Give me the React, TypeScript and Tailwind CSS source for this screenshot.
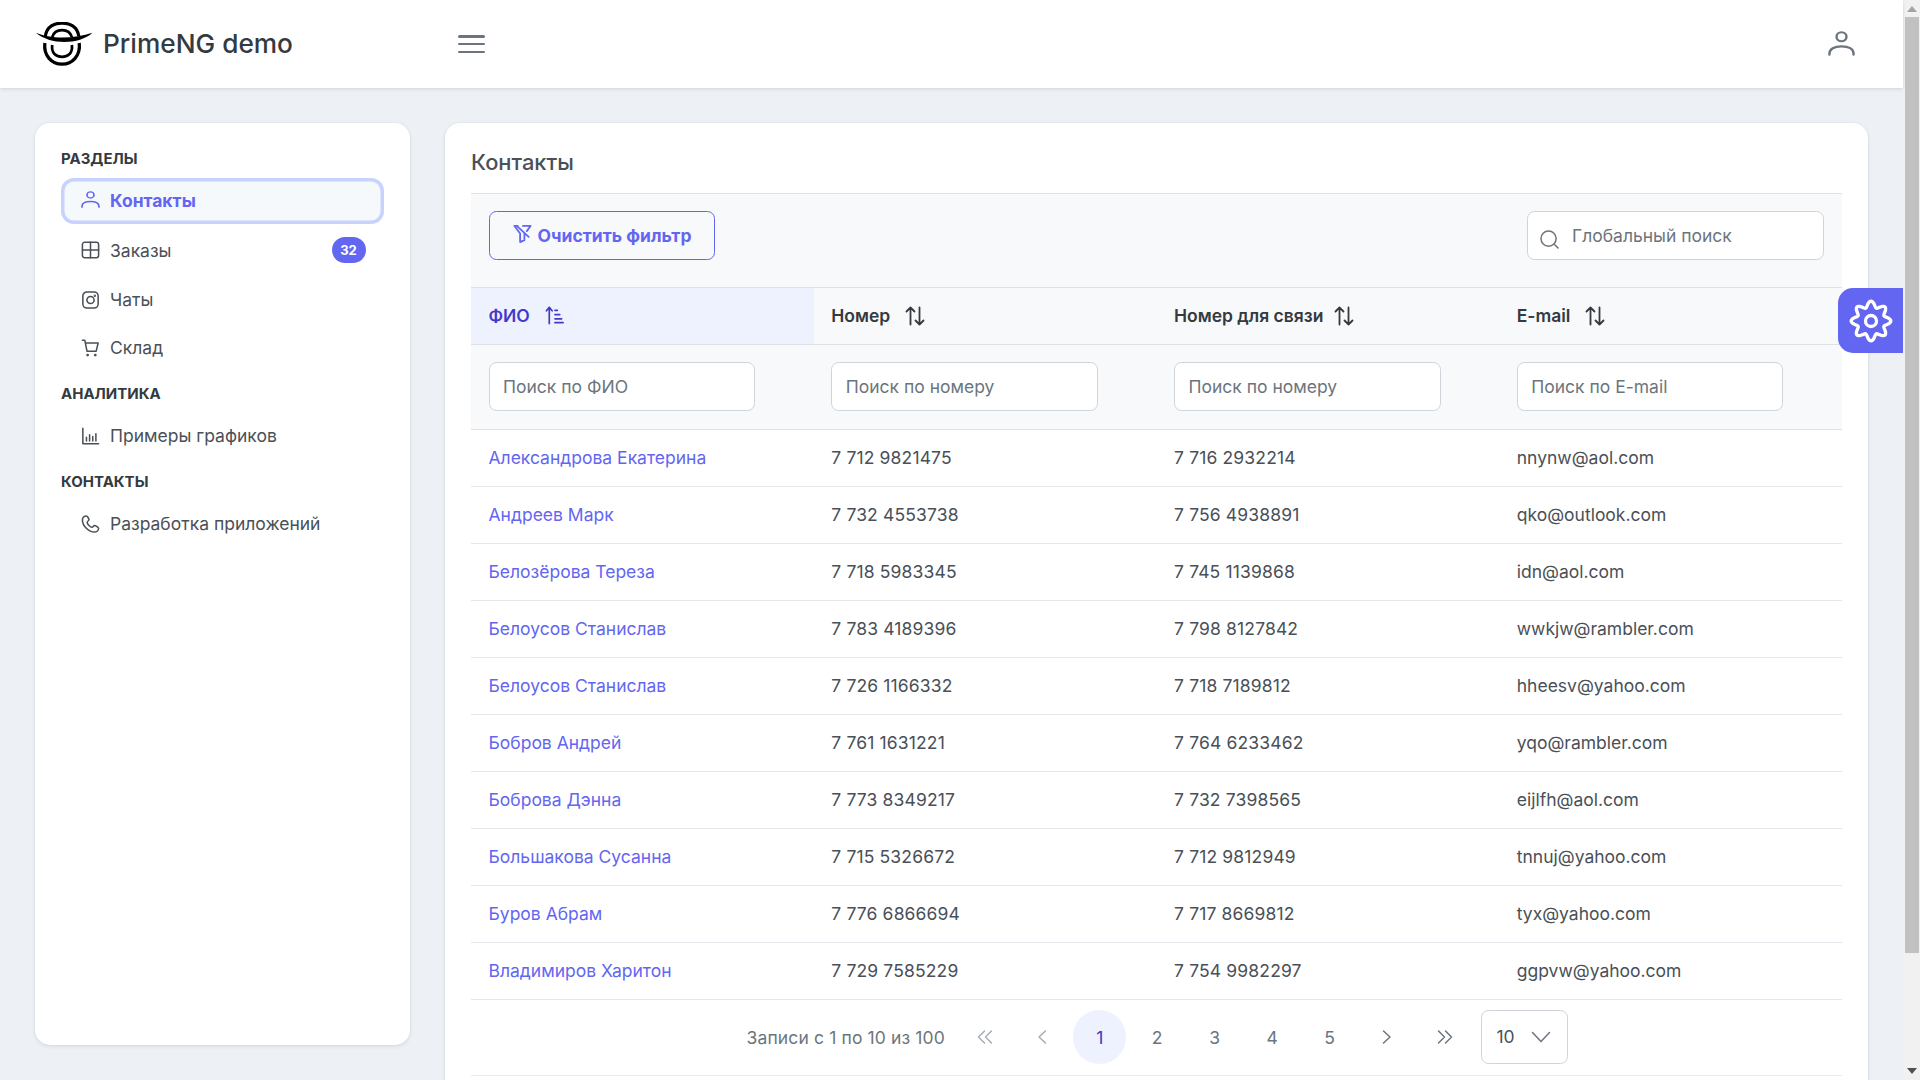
import type { ReactNode } from 'react'

// ---------------------------------------------------------------------------
// Data
// ---------------------------------------------------------------------------

const rows = [
  ['Александрова Екатерина', '7 712 9821475', '7 716 2932214', 'nnynw@aol.com'],
  ['Андреев Марк', '7 732 4553738', '7 756 4938891', 'qko@outlook.com'],
  ['Белозёрова Тереза', '7 718 5983345', '7 745 1139868', 'idn@aol.com'],
  ['Белоусов Станислав', '7 783 4189396', '7 798 8127842', 'wwkjw@rambler.com'],
  ['Белоусов Станислав', '7 726 1166332', '7 718 7189812', 'hheesv@yahoo.com'],
  ['Бобров Андрей', '7 761 1631221', '7 764 6233462', 'yqo@rambler.com'],
  ['Боброва Дэнна', '7 773 8349217', '7 732 7398565', 'eijlfh@aol.com'],
  ['Большакова Сусанна', '7 715 5326672', '7 712 9812949', 'tnnuj@yahoo.com'],
  ['Буров Абрам', '7 776 6866694', '7 717 8669812', 'tyx@yahoo.com'],
  ['Владимиров Харитон', '7 729 7585229', '7 754 9982297', 'ggpvw@yahoo.com'],
]

const cardShadow = 'shadow-[0_3px_5px_rgba(0,0,0,0.02),0_0_2px_rgba(0,0,0,0.05),0_1px_4px_rgba(0,0,0,0.08)]'

// ---------------------------------------------------------------------------
// Icons (thin outline set, drawn by hand)
// ---------------------------------------------------------------------------

function Icon({ className, children, stroke = '1.700' }: { className: string; children: ReactNode; stroke?: string }) {
  return (
    <svg viewBox="0 0 20 20" fill="none" stroke="currentColor" strokeWidth={stroke} strokeLinecap="round" strokeLinejoin="round" className={className}>
      {children}
    </svg>
  )
}

function UserIcon({ className }: { className: string }) {
  return (
    <svg viewBox="0.500 0.500 19 19.500" preserveAspectRatio="none" fill="none" stroke="currentColor" strokeWidth="1.700" strokeLinecap="round" className={className}>
      <circle cx="10" cy="5" r="3.500" />
      <path d="M1.500 19v-.8c0-3.800 3.400-5.700 8.500-5.700s8.500 1.900 8.500 5.700v.8" />
    </svg>
  )
}

function TableIcon({ className }: { className: string }) {
  return (
    <Icon className={className}>
      <rect x="1" y="1.500" width="18" height="17" rx="2.500" />
      <path d="M1 10h18M10 1.500v17" />
    </Icon>
  )
}

function InstagramIcon({ className }: { className: string }) {
  return (
    <Icon className={className}>
      <rect x="1.500" y="1" width="17" height="18" rx="4.500" />
      <circle cx="10" cy="10" r="4" />
      <circle cx="14.800" cy="5.200" r="0.500" />
    </Icon>
  )
}

function CartIcon({ className }: { className: string }) {
  return (
    <Icon className={className}>
      <path d="M1 1.500h2.700l2.400 12h10.200l2.200-9H4.500" />
      <circle cx="6.800" cy="17.800" r="0.700" />
      <circle cx="15.300" cy="17.800" r="0.700" />
    </Icon>
  )
}

function ChartIcon({ className }: { className: string }) {
  return (
    <Icon className={className}>
      <path d="M1.500 1.500v17h17.500M5.500 15.500v-4M9 15.500v-7M12.500 15.500v-5M16 15.500v-8" />
    </Icon>
  )
}

function PhoneIcon({ className }: { className: string }) {
  return (
    <Icon className={className}>
      <path d="M5.500 1C3 1 1 3 1 5.500 1 12 8 19 14.500 19c2.500 0 4.500-2 4.500-4 0-1-3.300-3.300-4.500-3.300-1 0-1.500 2-2.800 2-1.800 0-5.400-3.700-5.400-5.500 0-1.300 2-1.700 2-2.800C8.300 4.300 6.500 1 5.500 1Z" />
    </Icon>
  )
}

function FilterSlashIcon({ className }: { className: string }) {
  return (
    <Icon className={className} stroke="1.900">
      <path d="M5 1.500h-3.500l6 8v9l4.500-2v-6.500M10.500 1.500h8l-4 5.500M4 1.500l12.500 11.500" />
    </Icon>
  )
}

function SortIcon({ className }: { className: string }) {
  return (
    <Icon className={className} stroke="1.800">
      <path d="M5.500 18.500v-17M1.500 5.500l4-4 4 4M14.500 1.500v17M10.500 14.500l4 4 4-4" />
    </Icon>
  )
}

function SortUpIcon({ className }: { className: string }) {
  return (
    <Icon className={className} stroke="1.800">
      <path d="M4.500 18.500v-17M1.500 5l3-3.500 3 3.500M10.500 4.500h2.500M10.500 9h5M10.500 13.500h7M10.500 17.500h8.500" />
    </Icon>
  )
}

function PagerIcon({ d }: { d: string }) {
  return (
    <Icon className="h-[20px] w-[20px]" stroke="1.500">
      <path d={d} />
    </Icon>
  )
}

function gearPath() {
  const points: string[] = []
  for (let i = 0; i < 160; i++) {
    const angle = (i / 160) * Math.PI * 2
    const radius = 9.200 + 1.600 * Math.cos(8 * angle)
    points.push(`${(12 + radius * Math.sin(angle)).toFixed(2)} ${(12 - radius * Math.cos(angle)).toFixed(2)}`)
  }
  return `M${points.join('L')}Z`
}

function GearIcon({ className }: { className: string }) {
  return (
    <svg viewBox="0 0 24 24" fill="none" stroke="currentColor" strokeWidth="1.800" className={className}>
      <path d={gearPath()} />
      <circle cx="12" cy="12" r="3" />
    </svg>
  )
}

function Logo() {
  return (
    <svg viewBox="6 6 58 44" className="h-[44px] w-[57px] shrink-0 text-black" fill="none" stroke="currentColor">
      <path d="M15.500 20C17 10 25 6.800 32.500 6.800S48 10 49.500 20" strokeWidth="3.300" />
      <path d="M22.500 21C24 15.500 28 13.800 32.500 13.800S41 15.500 42.500 21" strokeWidth="2.800" />
      <path d="M6 16.500C20 23 45 23 63.500 16.500 50 29 20 29 6 16.500Z" fill="currentColor" stroke="none" />
      <path d="M15 27C13.500 40 22 48.500 32.500 48.500S51.500 40 50 27" strokeWidth="3.300" />
      <path d="M22.500 29C21.500 37 26 41 32.500 41S43.500 37 42.500 29" strokeWidth="2.800" />
    </svg>
  )
}

// ---------------------------------------------------------------------------
// Sidebar
// ---------------------------------------------------------------------------

function SectionLabel({ children, className }: { children: ReactNode; className: string }) {
  return <div className={`h-[21px] text-[15px] leading-[21px] font-bold text-[#343a40] uppercase ${className}`}>{children}</div>
}

function MenuItem({ icon, label, badge, className = '' }: { icon: ReactNode; label: string; badge?: string; className?: string }) {
  return (
    <a className={`flex h-[46.500px] items-center rounded-[13px] pr-[18.500px] pl-[20px] text-[#495057] ${className}`}>
      {icon}
      <span>{label}</span>
      {badge && (
        <span className="ml-auto flex h-[26px] w-[34px] items-center justify-center rounded-full bg-[#6366f1] text-[13px] font-bold text-white">
          {badge}
        </span>
      )}
    </a>
  )
}

function Sidebar() {
  const iconClass = 'mr-[10px] h-[18px] w-[19px] shrink-0 text-[#495057]'
  return (
    <aside className={`h-[922px] w-[375px] shrink-0 rounded-[15px] bg-white px-[26px] pt-[25px] ${cardShadow}`}>
      <SectionLabel className="mb-[9px]">Разделы</SectionLabel>
      <div className="flex flex-col gap-[3px]">
        <a className="flex h-[46.500px] items-center rounded-[13px] bg-[#f6f9fc] pl-[20px] font-bold text-[#6366f1] shadow-[inset_0_0_0_3.500px_#c7d2fe]">
          <UserIcon className="mr-[10px] -mt-[2px] h-[17px] w-[19px] shrink-0" />
          <span>Контакты</span>
        </a>
        <MenuItem icon={<TableIcon className={iconClass} />} label="Заказы" badge="32" />
        <MenuItem icon={<InstagramIcon className={iconClass} />} label="Чаты" />
        <MenuItem icon={<CartIcon className={iconClass} />} label="Склад" className="-mt-[1.500px]" />
      </div>
      <SectionLabel className="mt-[12px] mb-[8.500px]">Аналитика</SectionLabel>
      <MenuItem icon={<ChartIcon className={iconClass} />} label="Примеры графиков" />
      <SectionLabel className="mt-[12px] mb-[8.500px]">Контакты</SectionLabel>
      <MenuItem icon={<PhoneIcon className={iconClass} />} label="Разработка приложений" />
    </aside>
  )
}

// ---------------------------------------------------------------------------
// Table
// ---------------------------------------------------------------------------

const inputClass =
  'h-[48.500px] rounded-[7.500px] border border-[#ced4da] bg-white px-[13.500px] text-[17.500px] text-[#495057] outline-none placeholder:text-[#6c757d]'

function HeaderCell({ label, gap = 'gap-[15px]' }: { label: string; gap?: string }) {
  return (
    <th className="h-[56.500px] border-b border-[#dee2e6] px-[17.500px] text-left font-semibold text-[#343a40]">
      <span className={`flex items-center ${gap}`}>
        {label}
        <SortIcon className="h-[20px] w-[20px]" />
      </span>
    </th>
  )
}

function FilterCell({ placeholder }: { placeholder: string }) {
  return (
    <th className="border-b border-[#dee2e6] px-[17.500px] font-normal">
      <input placeholder={placeholder} className={`${inputClass} w-[266.500px]`} />
    </th>
  )
}

function PageButton({ children, dim, active }: { children: ReactNode; dim?: boolean; active?: boolean }) {
  return (
    <button
      className={`mx-[2.500px] flex h-[54.500px] w-[52.500px] items-center justify-center rounded-full ${
        active ? 'bg-[#eef2ff] text-[#4338ca]' : dim ? 'text-[#a7adb3]' : 'text-[#6c757d]'
      }`}
    >
      {children}
    </button>
  )
}

function Paginator() {
  return (
    <div className="flex h-[76px] items-center justify-center border-b border-[#e9ecef] pl-[2px] text-[#6c757d]">
      <span className="mr-[11px] tracking-[0.130px]">Записи с 1 по 10 из 100</span>
      <PageButton dim><PagerIcon d="M9.500 4L3.500 10l6 6M16.500 4l-6 6 6 6" /></PageButton>
      <PageButton dim><PagerIcon d="M13.500 4l-6.500 6 6.500 6" /></PageButton>
      <PageButton active>1</PageButton>
      <PageButton>2</PageButton>
      <PageButton>3</PageButton>
      <PageButton>4</PageButton>
      <PageButton>5</PageButton>
      <PageButton><PagerIcon d="M6.500 4l6.500 6-6.500 6" /></PageButton>
      <PageButton><PagerIcon d="M3.500 4l6 6-6 6M10.500 4l6 6-6 6" /></PageButton>
      <div className="ml-[8px] flex h-[54.500px] w-[87px] items-center rounded-[7.500px] border border-[#ced4da] bg-white pr-[16px] pl-[14px] text-[#495057]">
        <span className="-mt-[2px]">10</span>
        <Icon className="ml-auto h-[20px] w-[20px] text-[#6c757d]" stroke="1.500">
          <path d="M1.500 5.500l8.500 9 8.500-9" />
        </Icon>
      </div>
    </div>
  )
}

function ContactsCard() {
  return (
    <main className={`min-w-0 flex-1 rounded-[15px] bg-white px-[26px] pt-[25.500px] pb-[30px] ${cardShadow}`}>
      <h5 className="mb-[17px] text-[21.875px] leading-[28px] font-medium text-[#495057]">Контакты</h5>
      <div className="flex h-[94.500px] items-start justify-between border-y border-[#dee2e6] bg-[#f8f9fa] px-[18px] pt-[17px]">
        <button className="flex h-[48.500px] w-[226px] items-center justify-center gap-[6px] rounded-[7.500px] border border-[#6366f1] font-bold text-[#6366f1]">
          <FilterSlashIcon className="-mt-[2px] h-[20px] w-[19px]" />
          Очистить фильтр
        </button>
        <div className="relative">
          <input placeholder="Глобальный поиск" className={`${inputClass} w-[297px] pl-[44px]`} />
          <svg viewBox="0 0 20 20" fill="none" stroke="currentColor" strokeWidth="1.600" strokeLinecap="round" className="absolute top-[19px] left-[13px] h-[19px] w-[19px] text-[#6c757d]">
            <circle cx="9" cy="9" r="8" />
            <path d="M15 15l4 4" />
          </svg>
        </div>
      </div>
      <table className="w-full table-fixed border-collapse">
        <thead>
          <tr className="bg-[#f8f9fa]">
            <th className="h-[56.500px] border-b border-[#dee2e6] bg-[#eef2ff] px-[17.500px] text-left font-semibold text-[#4338ca]">
              <span className="flex items-center gap-[15px]">
                ФИО
                <SortUpIcon className="h-[19px] w-[19px]" />
              </span>
            </th>
            <HeaderCell label="Номер" />
            <HeaderCell label="Номер для связи" gap="gap-[11px]" />
            <HeaderCell label="E-mail" />
          </tr>
          <tr className="h-[85px] bg-[#f8f9fa] text-left">
            <FilterCell placeholder="Поиск по ФИО" />
            <FilterCell placeholder="Поиск по номеру" />
            <FilterCell placeholder="Поиск по номеру" />
            <FilterCell placeholder="Поиск по E-mail" />
          </tr>
        </thead>
        <tbody>
          {rows.map(([name, phone, contact, email], i) => (
            <tr key={i} className="h-[57px] border-b border-[#e4e7eb] text-[#495057]">
              <td className="px-[17.500px] text-[#6366f1]">{name}</td>
              <td className="px-[17.500px] tracking-[0.150px]">{phone}</td>
              <td className="px-[17.500px] tracking-[0.150px]">{contact}</td>
              <td className="px-[17.500px]">{email}</td>
            </tr>
          ))}
        </tbody>
      </table>
      <Paginator />
    </main>
  )
}

// ---------------------------------------------------------------------------
// Page
// ---------------------------------------------------------------------------

export default function App() {
  return (
    <div className="flex h-screen overflow-hidden font-['Inter',sans-serif] text-[17.500px] leading-[21px]">
      <div className="relative min-w-0 flex-1 bg-[#edf1f6]">
        <header className={`relative z-10 flex h-[88px] items-center bg-white pr-[35px] pl-[36px] ${cardShadow}`}>
          <Logo />
          <span className="-mt-[1px] ml-[10px] w-[355px] text-[26.250px] font-medium text-[#343a40]">PrimeNG demo</span>
          <div className="flex h-[18px] w-[27px] flex-col justify-between">
            <span className="h-[2.500px] rounded-full bg-[#6c757d]" />
            <span className="h-[2.500px] rounded-full bg-[#6c757d]" />
            <span className="h-[2.500px] rounded-full bg-[#6c757d]" />
          </div>
          <UserIcon className="mr-[13px] ml-auto -mt-[1px] h-[25px] w-[27px] text-[#6c757d]" />
        </header>
        <div className="flex gap-[35px] pt-[34.500px] pr-[35px] pl-[35px]">
          <Sidebar />
          <ContactsCard />
        </div>
        <button className="absolute top-[288px] right-0 z-20 flex h-[65px] w-[65px] items-center justify-center rounded-l-[15px] bg-[#6366f1] text-white">
          <GearIcon className="h-[44px] w-[44px]" />
        </button>
      </div>

      {/* Browser scrollbar */}
      <div className="flex w-[17px] shrink-0 flex-col items-center bg-[#f1f1f1]">
        <svg viewBox="0 0 10 6" className="mt-[6px] mb-[5px] h-[6px] w-[10px] text-[#a3a3a3]" fill="currentColor">
          <path d="M5 0l5 6H0z" />
        </svg>
        <div className="h-[936px] w-[14px] bg-[#c1c1c1]" />
        <svg viewBox="0 0 10 6" className="mt-auto mb-[6px] h-[6px] w-[10px] text-[#505050]" fill="currentColor">
          <path d="M0 0h10L5 6z" />
        </svg>
      </div>
    </div>
  )
}
